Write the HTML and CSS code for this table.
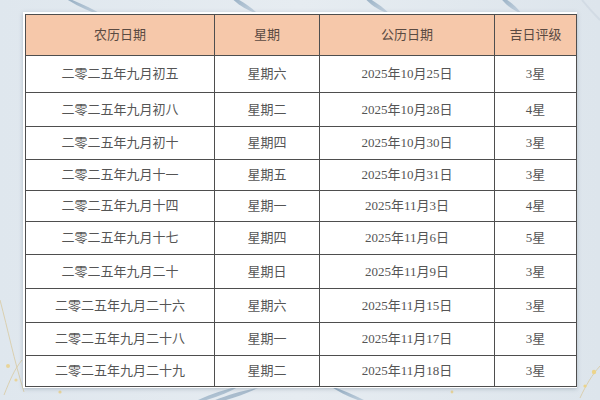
FILE: index.html
```html
<!DOCTYPE html>
<html lang="zh-CN">
<head>
<meta charset="utf-8">
<link rel="stylesheet" href="styles.css">
</head>
<body>
<svg class="deco" width="600" height="400" viewBox="0 0 600 400" aria-hidden="true">
  <defs>
    <linearGradient id="lf" x1="0" y1="0" x2="1" y2="1">
      <stop offset="0" stop-color="#8fa9bf"/>
      <stop offset="1" stop-color="#c9d6e2"/>
    </linearGradient>
  </defs>
  <path d="M62 -4 C78 2 92 8 104 16 C90 12 76 6 62 -4Z" fill="url(#lf)"/>
  <path d="M228 -6 C240 0 250 6 258 14 C246 10 236 4 228 -6Z" fill="url(#lf)"/>
  <path d="M362 -6 C372 0 382 6 390 14 C378 10 368 4 362 -6Z" fill="url(#lf)"/>
  <path d="M498 -6 C508 0 516 6 522 14 C512 10 504 4 498 -6Z" fill="url(#lf)"/>
  <path d="M190 404 C205 396 222 390 240 386 C226 394 210 400 190 404Z" fill="url(#lf)"/>
  <path d="M205 404 C220 398 236 392 258 388 C240 396 224 402 205 404Z" fill="#a9bccd"/>
  <path d="M330 386 C344 390 356 396 372 404 C354 400 342 394 330 386Z" fill="url(#lf)"/>
  <path d="M0 300 C8 330 14 360 24 392" stroke="#d8c9a0" stroke-width="0.8" fill="none"/>
  <path d="M4 395 C10 380 14 370 22 360" stroke="#d8c9a0" stroke-width="0.8" fill="none"/>
  <circle cx="8" cy="366" r="2" fill="#e8d49a"/>
  <circle cx="16" cy="380" r="1.6" fill="#e8d49a"/>
  <circle cx="60" cy="392" r="1.6" fill="#e8d49a"/>
  <path d="M580 398 C586 385 592 375 600 366" stroke="#d8c9a0" stroke-width="0.8" fill="none"/>
  <circle cx="594" cy="372" r="2.2" fill="#ecd48a"/>
  <circle cx="585" cy="386" r="1.6" fill="#ecd48a"/>
  <circle cx="452" cy="392" r="1.4" fill="#e8d49a"/>
  <path d="M582 0 C590 10 596 16 600 20" stroke="#d2dbe4" stroke-width="2" fill="none"/>
</svg>
<div class="paper">
  <table class="grid">
    <colgroup>
      <col class="c1"><col class="c2"><col class="c3"><col class="c4">
    </colgroup>
    <thead>
      <tr><th>农历日期</th><th>星期</th><th>公历日期</th><th>吉日评级</th></tr>
    </thead>
    <tbody>
      <tr><td>二零二五年九月初五</td><td>星期六</td><td>2025年10月25日</td><td>3星</td></tr>
      <tr><td>二零二五年九月初八</td><td>星期二</td><td>2025年10月28日</td><td>4星</td></tr>
      <tr><td>二零二五年九月初十</td><td>星期四</td><td>2025年10月30日</td><td>3星</td></tr>
      <tr><td>二零二五年九月十一</td><td>星期五</td><td>2025年10月31日</td><td>3星</td></tr>
      <tr><td>二零二五年九月十四</td><td>星期一</td><td>2025年11月3日</td><td>4星</td></tr>
      <tr><td>二零二五年九月十七</td><td>星期四</td><td>2025年11月6日</td><td>5星</td></tr>
      <tr><td>二零二五年九月二十</td><td>星期日</td><td>2025年11月9日</td><td>3星</td></tr>
      <tr><td>二零二五年九月二十六</td><td>星期六</td><td>2025年11月15日</td><td>3星</td></tr>
      <tr><td>二零二五年九月二十八</td><td>星期一</td><td>2025年11月17日</td><td>3星</td></tr>
      <tr><td>二零二五年九月二十九</td><td>星期二</td><td>2025年11月18日</td><td>3星</td></tr>
    </tbody>
  </table>
</div>
</body>
</html>
```

FILE: styles.css
```css
html, body {
  margin: 0;
  padding: 0;
}
body {
  width: 600px;
  height: 400px;
  overflow: hidden;
  position: relative;
  background: linear-gradient(90deg, #dfe7ee 0%, #e6ecf1 50%, #dde5ec 100%);
  font-family: "Liberation Serif", "Noto Sans CJK SC", serif;
}
.deco {
  position: absolute;
  left: 0;
  top: 0;
}
.paper {
  position: relative;
  margin: 12px 0 0 23px;
  width: 554px;
  height: 376px;
  box-sizing: border-box;
  padding: 2px 0 0 2px;
  background: #ffffff;
  box-shadow: 0 1px 4px rgba(90, 110, 130, 0.35);
}
.grid {
  border-collapse: collapse;
  table-layout: fixed;
  width: 551px;
}
.c1 { width: 189px; }
.c2 { width: 105px; }
.c3 { width: 175px; }
.c4 { width: 82px; }
.grid th, .grid td {
  border: 1px solid #4e4e4e;
  padding: 0;
  text-align: center;
  vertical-align: middle;
  font-size: 13px;
  font-weight: normal;
  color: #555555;
  line-height: 16px;
}
.grid th {
  background: #f6c8aa;
  height: 40px;
  color: #5a4a42;
}
.grid tbody tr td { height: 32px; }
.grid tbody tr:nth-child(1) td { height: 36px; }
.grid tbody tr:nth-child(2) td { height: 33px; }
.grid tbody tr:nth-child(3) td { height: 32px; }
.grid tbody tr:nth-child(4) td { height: 30px; }
.grid tbody tr:nth-child(5) td { height: 30px; }
.grid tbody tr:nth-child(6) td { height: 32px; }
.grid tbody tr:nth-child(7) td { height: 33px; }
.grid tbody tr:nth-child(8) td { height: 33px; }
.grid tbody tr:nth-child(9) td { height: 32px; }
.grid tbody tr:nth-child(10) td { height: 30px; }
```
